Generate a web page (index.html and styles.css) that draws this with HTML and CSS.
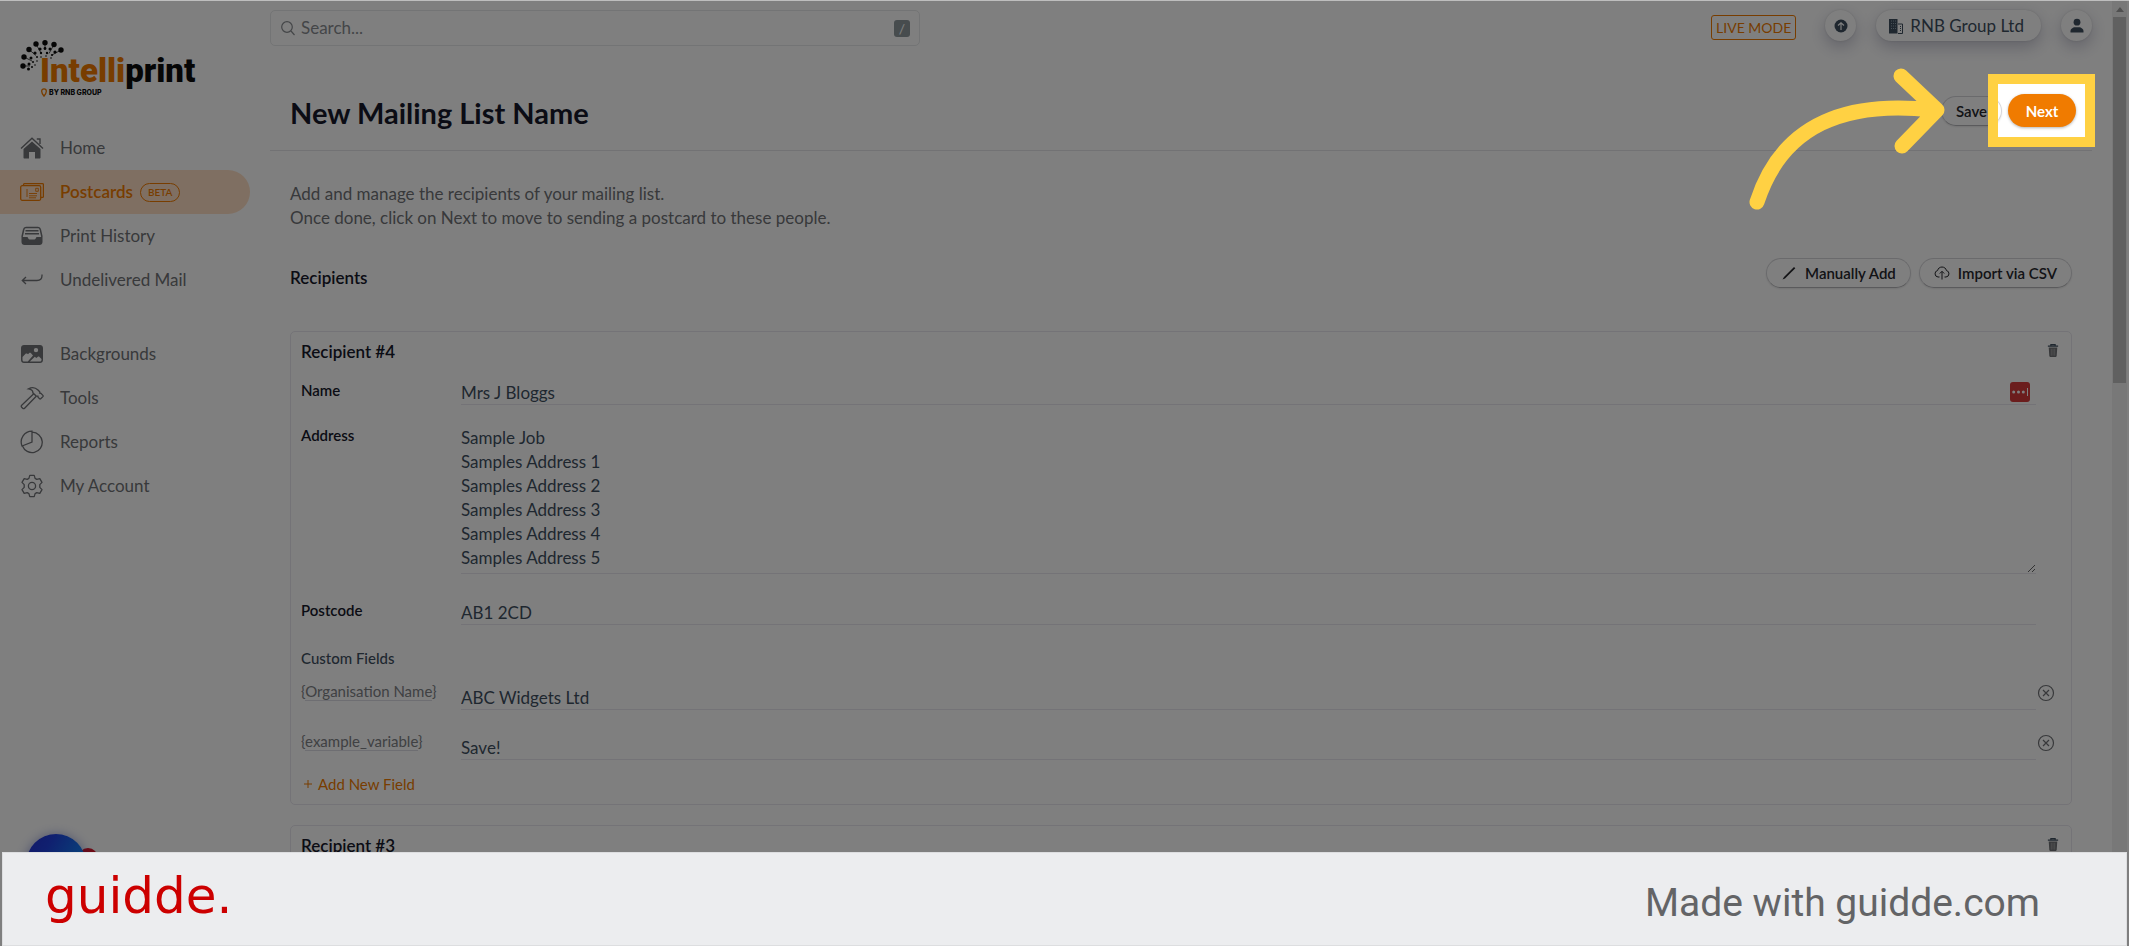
FILE: index.html
```html
<!doctype html>
<html lang="en">

<head>
  <meta charset="UTF-8" />
  <meta name="viewport" content="width=device-width, initial-scale=1.0" />
  <title>New Mailing List - Intelliprint</title>
  <link rel="stylesheet" href="styles.css">
</head>

<body>
  <div class="page">
    <aside class="sidebar">
      <a class="logo" href="#" aria-label="Intelliprint by RNB Group">
        <svg class="logo-burst" viewBox="0 0 44 32">
          <g fill="#0c0c0c">
            <circle cx="3" cy="26" r="2.7" />
            <circle cx="4" cy="17" r="2.7" />
            <circle cx="9" cy="9.5" r="2.7" />
            <circle cx="16" cy="4" r="2.7" />
            <circle cx="25" cy="2.7" r="2.7" />
            <circle cx="34" cy="4.5" r="2.7" />
            <circle cx="41" cy="10" r="2.7" />
            <circle cx="9" cy="24" r="1.5" />
            <circle cx="8.5" cy="29" r="1.5" />
            <circle cx="11" cy="18" r="1.5" />
            <circle cx="15" cy="13" r="1.6" />
            <circle cx="20" cy="9" r="1.6" />
            <circle cx="25" cy="8.5" r="1.4" />
            <circle cx="30" cy="9" r="1.5" />
            <circle cx="35" cy="12" r="1.6" />
            <circle cx="12" cy="27" r="1" />
            <circle cx="13" cy="22" r="1" />
            <circle cx="17" cy="17" r="1" />
            <circle cx="21" cy="13" r="1.2" />
            <circle cx="27" cy="13" r="1.2" />
            <circle cx="32" cy="15" r="1.1" />
            <circle cx="15" cy="25" r=".8" />
            <circle cx="17" cy="21" r=".8" />
            <circle cx="21" cy="17" r=".8" />
            <circle cx="26" cy="16" r=".8" />
            <circle cx="31" cy="18" r=".8" />
          </g>
          <path d="M3 26h7M4 17l8 4M9 9.5l7 6M16 4l5 9M25 3v7M34 4.5l-5 9M41 10l-9 5" stroke="#0c0c0c" stroke-width=".7" />
        </svg>
        <span class="logo-name"><span class="logo-orange">Intelli</span>print</span>
        <span class="logo-by">
          <svg viewBox="0 0 8 10"><path d="M4 1a2.6 2.6 0 0 0-2.6 2.6C1.4 5.6 4 9 4 9s2.6-3.4 2.6-5.4A2.6 2.6 0 0 0 4 1z" fill="none" stroke="#f07b00" stroke-width="1.5" /></svg>
          BY RNB GROUP
        </span>
      </a>

      <nav class="nav">
        <a href="#">
          <svg viewBox="0 0 24 24" class="solid">
            <path d="M12 5.5 3.5 13v8.5c0 .6.4 1 1 1H9V16h6v6.500h4.500c.6 0 1-.4 1-1V13z" />
            <path d="M1 12.500 12 2.200l11 10.300M16.800 3h3.200v5" fill="none" stroke="currentColor" stroke-width="1.4" />
          </svg>
          Home
        </a>
        <a href="#" class="active">
          <svg viewBox="0 0 24 24">
            <rect x=".7" y="5.7" width="20" height="14.6" rx="1.5" />
            <path d="M3.500 5.500V4.700c0-.6.400-1 1-1h18c.5 0 .9.400.9.900v11.800c0 .5-.4.900-.9.900h-1.500" />
            <path d="M7 9v8M9 13.500h8M9 15.800h8M9 17.800h7M15.700 8.300h2.600v3h-2.600z" stroke-width=".9" />
          </svg>
          Postcards <span class="beta">BETA</span>
        </a>
        <a href="#">
          <svg viewBox="0 0 24 24" class="solid">
            <path d="M1.500 13h6l.8 1.600c.3.500.8.900 1.400.9h4.600c.6 0 1.100-.4 1.400-.9l.8-1.600h6V18c0 1.700-1.300 3-3 3h-15c-1.700 0-3-1.300-3-3z" />
            <path d="m2 13 1.700-7.500C4 4 5 3.500 6 3.500h12c1 0 2 .5 2.300 2L22 13M5.500 6.800h13M5 9.800h14" fill="none" stroke="currentColor" stroke-width="1.5" />
          </svg>
          Print History
        </a>
        <a href="#">
          <svg viewBox="0 0 24 24"><path d="M22 6.500v1c0 3-2 5-5 5H2.500M6 9l-3.700 3.500L6 16" /></svg>
          Undelivered Mail
        </a>
        <a href="#" class="group-start">
          <svg viewBox="0 0 24 24" class="solid">
            <path fill-rule="evenodd" d="M4 3h16c1.700 0 3 1.300 3 3v12c0 1.700-1.300 3-3 3H4c-1.700 0-3-1.300-3-3V6c0-1.700 1.300-3 3-3zM2.500 15v3c0 .8.700 1.500 1.500 1.500h3.800l5.200-6-2-2.200c-.6-.6-1.400-.6-2 0l-1 1-1-.7c-.5-.3-1-.3-1.400.1zM9.800 19.500H20c.8 0 1.500-.7 1.500-1.500v-1l-2-2c-.5-.6-1.300-.6-1.900-.1l-1.300 1-1.500-1.200zM16 5.900a2.200 2.200 0 1 0 0 4.400 2.200 2.200 0 0 0 0-4.400z" />
          </svg>
          Backgrounds
        </a>
        <a href="#">
          <svg viewBox="0 0 24 24"><path d="M13.500 8 1.700 19.300c-.6.600-.6 1.300 0 1.900l1 1c.6.600 1.300.6 1.900 0L16 10.500M8.500 2.800c3-1.600 7-1.200 9.500 1.200l1.700 1.800c.3.300.2.800 0 1.200l1.200.4 2 2c.4.400.3.800 0 1.200l-2.200 2.200c-.4.300-.8.300-1.100 0l-1.400-1.400c-.3-.3-.4-.7-.2-1.200l-2-.4-3.200-3c.4-1.800-1.400-3.600-4.300-4z" /></svg>
          Tools
        </a>
        <a href="#">
          <svg viewBox="0 0 24 24"><path d="M12 1.200A10.800 10.800 0 0 0 2 16l10-4zM12.300 2.200A10.200 10.200 0 1 1 2.500 16" /></svg>
          Reports
        </a>
        <a href="#">
          <svg viewBox="0 0 24 24">
            <circle cx="12" cy="12" r="3.6" />
            <path d="M9.800 1.400h4.400l.9 3 1.700 1 3-.8 2.200 3.800-2.200 2.200v2.800l2.200 2.200-2.200 3.800-3-.8-1.700 1-.9 3H9.800l-.9-3-1.700-1-3 .8L2 15.600l2.200-2.200v-2.800L2 8.400l2.200-3.800 3 .8 1.700-1z" stroke-linejoin="round" />
          </svg>
          My Account
        </a>
      </nav>
    </aside>

    <main class="main">
      <div class="topbar">
        <div class="search">
          <svg viewBox="0 0 16 16"><circle cx="7" cy="7" r="5.3" /><path d="m11 11 3.500 4" /></svg>
          <input type="text" placeholder="Search..." aria-label="Search">
          <kbd>/</kbd>
        </div>
        <div class="topbar-right">
          <span class="live-mode">LIVE MODE</span>
          <button class="round" aria-label="Updates">
            <svg viewBox="0 0 16 16"><circle cx="8" cy="8" r="6.5" fill="#3f4f5f" /><path d="M8 12V5M5 7.500 8 4.700l3 2.800" fill="none" stroke="#fff" stroke-width="1.2" /></svg>
          </button>
          <button class="company">
            <svg viewBox="0 0 16 16">
              <path d="M1 1h8.500v14.500H1z" fill="#3f4f5f" />
              <path d="M3 3h5M3 5.500h5M3 8h5M3 10.500h5" stroke="#8fa0ad" stroke-width="1" stroke-dasharray="1 1" />
              <path d="M10 6h4.500v9.500H10" fill="none" stroke="#3f4f5f" />
              <path d="M12.500 8v6" stroke="#3f4f5f" stroke-dasharray="1 1" />
            </svg>
            RNB Group Ltd
          </button>
          <button class="round" aria-label="Profile">
            <svg viewBox="0 0 16 16" fill="#3f4f5f"><circle cx="8" cy="4.2" r="3.4" /><path d="M1.500 14.500v-1.300c0-2.200 2.300-3.900 4.500-3.900h4c2.200 0 4.500 1.700 4.500 3.900v1.300z" /></svg>
          </button>
        </div>
      </div>

      <div class="title-row">
        <h1>New Mailing List Name</h1>
        <div class="title-actions">
          <button class="pill">Save</button>
          <div class="next-step">
            <button class="next">Next</button>
            <div class="spotlight"></div>
            <svg class="arrow" viewBox="0 0 200 150">
              <path d="M10 136C35 59 98 34 186 44M154 10l36 34-35 36" />
            </svg>
          </div>
        </div>
      </div>

      <div class="content">
        <p class="intro">Add and manage the recipients of your mailing list.<br>Once done, click on Next to move to sending a postcard to these people.</p>

        <div class="recipients-head">
          <h2>Recipients</h2>
          <div class="recipients-actions">
            <button class="pill">
              <svg viewBox="0 0 16 16"><path d="M1.500 14.500 3 12 13 2l1.300 1.300L4 13.500z" fill="currentColor" stroke="none" /></svg>
              Manually Add
            </button>
            <button class="pill">
              <svg viewBox="0 0 16 16"><path d="M5.500 12H4a3.300 3.300 0 0 1-.4-6.500C4 3.400 5.800 2 8 2s4 1.400 4.400 3.500A3.300 3.300 0 0 1 12 12h-1.500M8 14.500V6.500M5.800 8.500 8 6.300l2.200 2.200" /></svg>
              Import via CSV
            </button>
          </div>
        </div>

        <section class="card">
          <div class="card-head">
            <h3>Recipient #4</h3>
            <button class="trash" aria-label="Delete recipient">
              <svg viewBox="0 0 14 16"><path d="M4.500 2.500V1.200h5v1.300M1 3h12" fill="none" stroke="currentColor" stroke-width="1.4" /><path d="M2 4.500h10l-.7 10c0 .6-.4 1-1 1H3.700c-.6 0-1-.4-1-1z" /><path d="M5 6v8M7 6v8M9 6v8" stroke="#aaa" stroke-width=".9" /></svg>
            </button>
          </div>
          <div class="field">
            <label for="name">Name</label>
            <div class="control">
              <input type="text" id="name" value="Mrs J Bloggs">
              <svg class="pass-badge" viewBox="0 0 20 20"><rect width="20" height="20" rx="3" fill="#d63a3a" /><g fill="#fff"><circle cx="3.7" cy="10" r="1.5" /><circle cx="8.5" cy="10" r="1.5" /><circle cx="13.3" cy="10" r="1.5" /><path d="M17 6h1v8h-1z" /></g></svg>
            </div>
          </div>
          <div class="field">
            <label for="address">Address</label>
            <textarea id="address" rows="6">Sample Job
Samples Address 1
Samples Address 2
Samples Address 3
Samples Address 4
Samples Address 5</textarea>
          </div>
          <div class="field">
            <label for="postcode">Postcode</label>
            <input type="text" id="postcode" value="AB1 2CD">
          </div>
          <h4>Custom Fields</h4>
          <div class="field custom">
            <label for="organisation">{<span>Organisation Name</span>}</label>
            <input type="text" id="organisation" value="ABC Widgets Ltd">
            <button class="remove" aria-label="Remove field">
              <svg viewBox="0 0 18 18"><circle cx="9" cy="9" r="7.5" /><path d="m6 6 6 6M12 6l-6 6" /></svg>
            </button>
          </div>
          <div class="field custom">
            <label for="example">{<span>example_variable</span>}</label>
            <input type="text" id="example" value="Save!">
            <button class="remove" aria-label="Remove field">
              <svg viewBox="0 0 18 18"><circle cx="9" cy="9" r="7.5" /><path d="m6 6 6 6M12 6l-6 6" /></svg>
            </button>
          </div>
          <button class="add-field">
            <svg viewBox="0 0 10 10"><path d="M5 1v8M1 5h8" /></svg>
            Add New Field
          </button>
        </section>

        <section class="card">
          <div class="card-head">
            <h3>Recipient #3</h3>
            <button class="trash" aria-label="Delete recipient">
              <svg viewBox="0 0 14 16"><path d="M4.500 2.500V1.200h5v1.300M1 3h12" fill="none" stroke="currentColor" stroke-width="1.4" /><path d="M2 4.500h10l-.7 10c0 .6-.4 1-1 1H3.700c-.6 0-1-.4-1-1z" /><path d="M5 6v8M7 6v8M9 6v8" stroke="#aaa" stroke-width=".9" /></svg>
            </button>
          </div>
        </section>
      </div>
    </main>

    <div class="scrollbar">
      <svg viewBox="0 0 10 6"><path d="M0 6 5 0l5 6z" /></svg>
      <div class="thumb"></div>
    </div>

    <div class="chat-badge"></div>
    <div class="chat"></div>
  </div>

  <footer class="guidde">
    <span class="guidde-logo">guidde.</span>
    <span class="made-with">Made with guidde.com</span>
  </footer>
</body>

</html>
```

FILE: styles.css
```css
:root {
  --orange: #f07b00;
  --text: #3f4f5f;
  --muted: #707276;
  --dark: #16182a;
  --line: #e8e6ee;
  --highlight: #ffd143;
}

* {
  margin: 0;
  padding: 0;
  box-sizing: border-box;
}

body {
  height: 100vh;
  overflow: hidden;
  background: #fff;
  font-family: Lato, "Liberation Sans", sans-serif;
  font-size: 17px;
  line-height: 24px;
  color: var(--text);
}

button,
input,
textarea {
  font: inherit;
  color: inherit;
  border: none;
  background: none;
  outline: none;
}

button {
  cursor: pointer;
}

a {
  color: inherit;
  text-decoration: none;
}

svg {
  flex: none;
}

.page {
  position: relative;
  display: flex;
  height: 100vh;
  overflow: hidden;
  padding-right: 2px;
  border-top: 1px solid #bebebe;
}

/* sidebar */
.sidebar {
  flex: none;
  width: 270px;
  padding-top: 39px;
}

.logo {
  position: relative;
  display: block;
  width: 176px;
  height: 58px;
  margin-left: 20px;
  color: #0c0c0c;
}

.logo-burst {
  position: absolute;
  left: 0;
  top: 0;
  width: 44px;
  height: 32px;
}

.logo-name {
  display: block;
  padding: 14px 0 0 20px;
  font-family: Roboto, sans-serif;
  font-weight: 900;
  font-size: 33px;
  line-height: 34px;
}

.logo-orange {
  color: var(--orange);
}

.logo-by {
  display: flex;
  align-items: center;
  gap: 1px;
  padding-left: 20px;
  font-family: Inter, sans-serif;
  font-weight: 800;
  font-size: 7px;
  line-height: 8px;
}

.logo-by svg {
  width: 8px;
  height: 9px;
}

.nav {
  padding-top: 28px;
}

.nav a {
  display: flex;
  align-items: center;
  gap: 16px;
  width: 250px;
  height: 44px;
  padding-left: 20px;
  border-radius: 0 22px 22px 0;
  color: var(--muted);
}

.nav svg {
  width: 24px;
  height: 24px;
  fill: none;
  stroke: currentColor;
  stroke-width: 1.3;
}

.nav svg.solid {
  fill: currentColor;
  stroke: none;
}

.nav .active {
  background: #ffdfc4;
  color: var(--orange);
  font-weight: 600;
}

.nav .group-start {
  margin-top: 30px;
}

.beta {
  margin-left: -9px;
  padding: 0 7px;
  border: 1px solid;
  border-radius: 10px;
  font-size: 10px;
  line-height: 17px;
}

/* top bar */
.main {
  flex: 1;
  min-width: 0;
  padding: 9px 20px 0 0;
}

.topbar {
  display: flex;
  justify-content: space-between;
}

.search {
  display: flex;
  align-items: center;
  gap: 5px;
  width: 650px;
  height: 36px;
  padding: 0 9px;
  border: 1px solid #e6e8ea;
  border-radius: 5px;
}

.search svg {
  width: 16px;
  height: 16px;
  fill: none;
  stroke: #888c90;
  stroke-width: 1.2;
}

.search input {
  flex: 1;
}

.search input::placeholder {
  color: #888c90;
}

kbd {
  width: 16px;
  border-radius: 3px;
  background: #8e989c;
  color: #fff;
  font-family: inherit;
  font-size: 14px;
  line-height: 17px;
  text-align: center;
}

.topbar-right {
  display: flex;
  align-items: flex-start;
  gap: 20px;
}

.live-mode {
  margin: 5px 9px 0 0;
  padding: 0 4px;
  border: 1px solid var(--orange);
  border-radius: 3px;
  color: var(--orange);
  font-size: 14px;
  line-height: 23px;
}

.round,
.company {
  display: flex;
  align-items: center;
  justify-content: center;
  height: 31px;
  border-radius: 16px;
  box-shadow: 0 0 2px rgba(0, 0, 0, 0.15), 0 6px 16px rgba(50, 50, 93, 0.28);
}

.round {
  width: 31px;
}

.round svg,
.company svg {
  width: 16px;
  height: 16px;
}

.company {
  gap: 6px;
  padding: 0 17px 0 12px;
}

/* title */
.title-row {
  display: flex;
  align-items: center;
  justify-content: space-between;
  padding: 48px 16px 23px 20px;
  border-bottom: 1px solid #e4e4e8;
}

h1 {
  padding-top: 4px;
  color: var(--dark);
  font-size: 29px;
  font-weight: 700;
  line-height: 29px;
}

.title-actions {
  display: flex;
  align-items: center;
  gap: 6px;
}

.pill {
  display: flex;
  align-items: center;
  gap: 8px;
  height: 30px;
  padding: 0 14px;
  border: 1px solid #d4d4d8;
  border-bottom-color: #b4b4b8;
  border-radius: 15px;
  box-shadow: 0 1px 2px rgba(0, 0, 0, 0.1);
  color: #26272c;
  font-size: 15px;
  font-weight: 600;
}

.pill svg {
  width: 16px;
  height: 16px;
  fill: none;
  stroke: currentColor;
}

.next-step {
  position: relative;
}

.next {
  width: 68px;
  height: 33px;
  border-radius: 17px;
  background: var(--orange);
  box-shadow: 0 1px 3px rgba(0, 0, 0, 0.3);
  color: #fff;
  font-size: 15px;
  font-weight: 700;
}

/* guide highlight, its shadow dims the rest of the page */
.spotlight {
  position: absolute;
  z-index: 10;
  left: -20px;
  top: -20px;
  width: 107px;
  height: 73px;
  border: 10px solid var(--highlight);
  box-shadow: 0 0 0 3000px rgba(0, 0, 0, 0.5);
  pointer-events: none;
}

.arrow {
  position: absolute;
  z-index: 11;
  right: 129px;
  top: -28px;
  width: 200px;
  height: 150px;
  fill: none;
  stroke: var(--highlight);
  stroke-width: 15;
  stroke-linecap: round;
  stroke-linejoin: round;
}

/* content */
.content {
  padding: 31px 20px 0;
}

.intro {
  color: var(--muted);
}

.recipients-head {
  display: flex;
  align-items: center;
  justify-content: space-between;
  margin: 26px 0 41px;
}

h2 {
  padding-top: 10px;
  color: var(--dark);
  font-size: 17px;
  font-weight: 600;
}

.recipients-actions {
  display: flex;
  gap: 8px;
}

.card {
  margin-bottom: 20px;
  padding: 8px 35px 10px 10px;
  border: 1px solid var(--line);
  border-radius: 5px;
}

.card-head {
  display: flex;
  justify-content: space-between;
  margin: 0 -23px 16px 0;
}

h3 {
  color: var(--dark);
  font-size: 17px;
  font-weight: 600;
}

.trash {
  display: flex;
  padding-top: 3px;
}

.trash svg {
  width: 12px;
  height: 15px;
  fill: #707276;
}

.field {
  position: relative;
  display: grid;
  grid-template-columns: 160px 1fr;
  align-items: start;
  margin-bottom: 20px;
}

.field label {
  color: var(--dark);
  font-size: 15px;
  font-weight: 600;
  line-height: 20px;
}

.field input,
.field textarea {
  display: block;
  width: 100%;
  border-bottom: 1px solid var(--line);
}

.field input {
  height: 25px;
}

.field textarea {
  height: 149px;
  margin-bottom: 6px;
  padding-top: 1px;
  resize: vertical;
}

.control {
  position: relative;
}

.pass-badge {
  position: absolute;
  right: 6px;
  top: 2px;
  width: 20px;
  height: 20px;
}

h4 {
  margin: 23px 0 13px;
  font-size: 15px;
  font-weight: 500;
  line-height: 20px;
}

.field.custom {
  margin-bottom: 21px;
}

.field.custom label {
  color: #808286;
  font-weight: 400;
}

.field.custom label span {
  border-bottom: 1px solid #dcdce4;
}

.field.custom input {
  margin-top: 4px;
}

.remove {
  position: absolute;
  right: -19px;
  top: 3px;
  display: flex;
}

.remove svg {
  width: 18px;
  height: 18px;
  fill: none;
  stroke: #707276;
  stroke-width: 1.2;
}

.add-field {
  display: flex;
  align-items: center;
  gap: 5px;
  margin: -7px 0 0 2px;
  color: var(--orange);
  font-size: 15px;
  line-height: 20px;
}

.add-field svg {
  width: 10px;
  height: 10px;
  stroke: currentColor;
}

/* scrollbar */
.scrollbar {
  display: flex;
  flex-direction: column;
  align-items: center;
  gap: 5px;
  width: 15px;
  padding-top: 6px;
  background: #f1f1f1;
}

.scrollbar svg {
  width: 8px;
  height: 5px;
  fill: #a0a0a0;
}

.thumb {
  width: 13px;
  height: 39%;
  background: #c1c1c1;
}

/* chat bubble */
.chat {
  position: absolute;
  left: 26px;
  bottom: 52px;
  width: 60px;
  height: 60px;
  border-radius: 50%;
  background: linear-gradient(120deg, #2430d0, #2040e0 30%, #0aa8ff);
  box-shadow: 0 1px 12px rgba(40, 60, 180, 0.5);
}

.chat-badge {
  position: absolute;
  left: 78px;
  bottom: 78px;
  width: 20px;
  height: 20px;
  border-radius: 50%;
  background: #e01428;
}

/* footer */
.guidde {
  position: fixed;
  z-index: 20;
  left: 2px;
  right: 2px;
  bottom: 0;
  display: flex;
  align-items: center;
  justify-content: space-between;
  height: 94px;
  padding: 0 86px 0 42px;
  border: 1px solid #dddee0;
  background: #ecedef;
}

.guidde-logo {
  padding-bottom: 6px;
  color: #cc0000;
  font-family: "DejaVu Sans", sans-serif;
  font-size: 50px;
  line-height: 60px;
}

.made-with {
  padding-top: 8px;
  color: #636466;
  font-family: Roboto, sans-serif;
  font-size: 39px;
  line-height: 48px;
}
```
